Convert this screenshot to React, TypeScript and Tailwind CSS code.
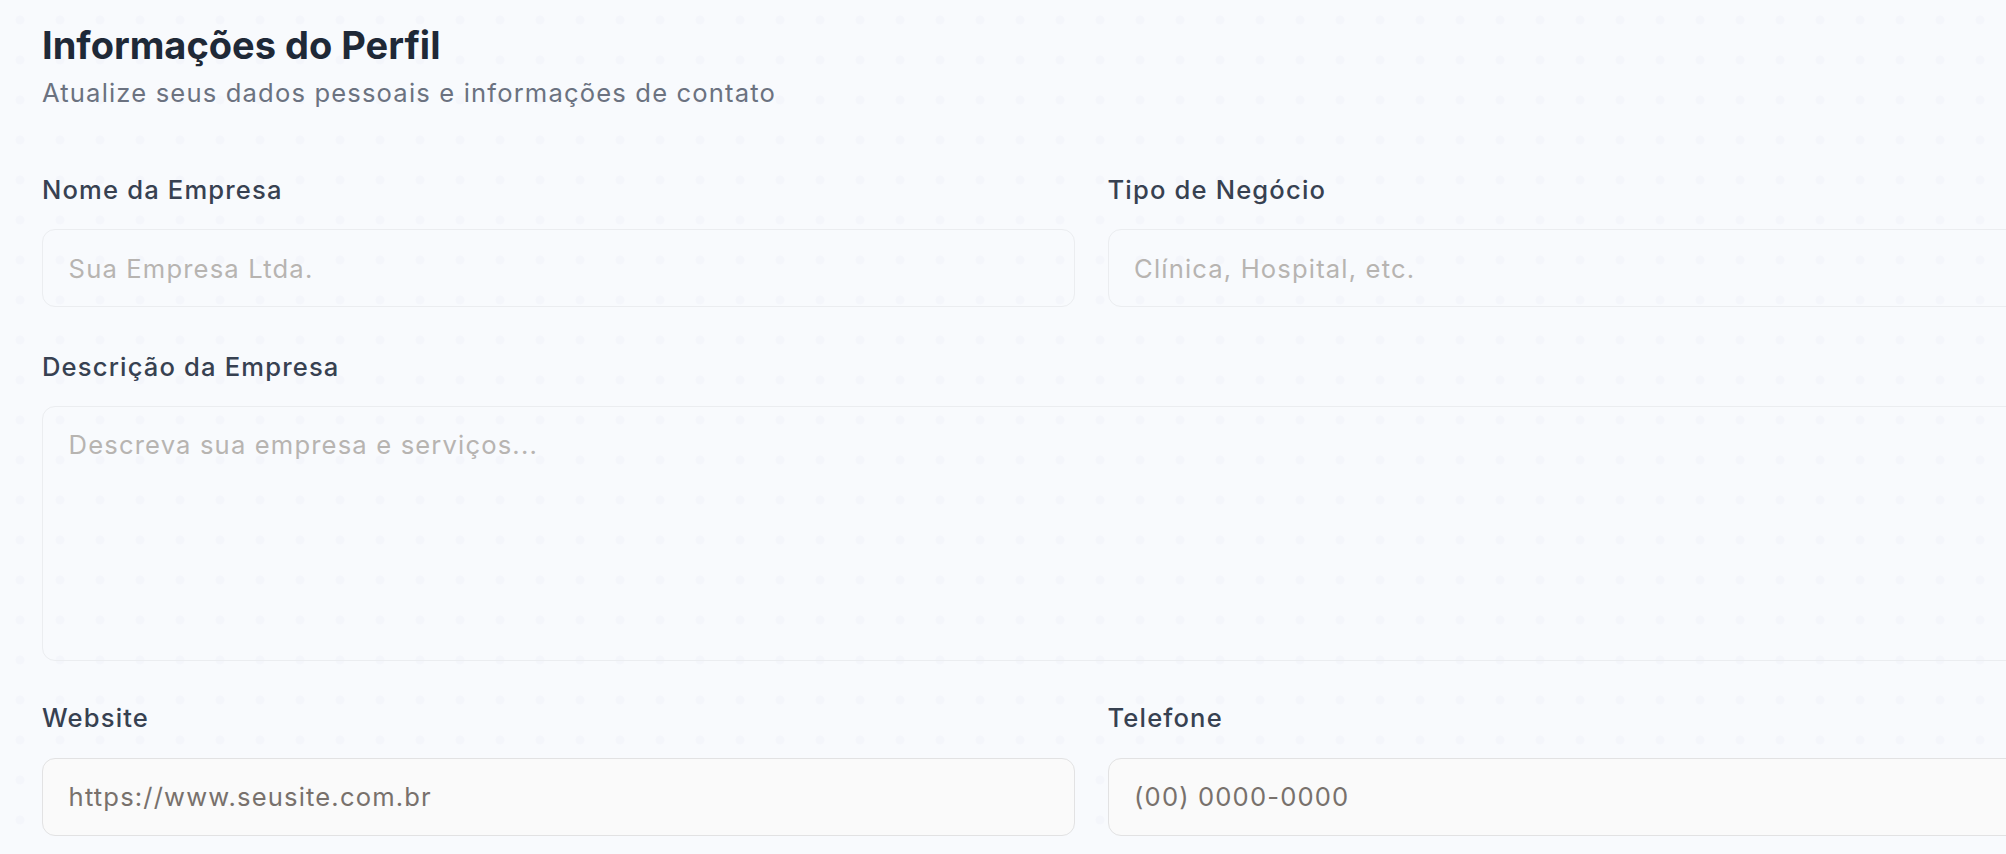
type Field = {
  label: string;
  placeholder: string;
  filled?: boolean;
};

const topRow: Field[] = [
  { label: 'Nome da Empresa', placeholder: 'Sua Empresa Ltda.' },
  { label: 'Tipo de Negócio', placeholder: 'Clínica, Hospital, etc.' },
];

const bottomRow: Field[] = [
  { label: 'Website', placeholder: 'https://www.seusite.com.br', filled: true },
  { label: 'Telefone', placeholder: '(00) 0000-0000', filled: true },
];

function TextField({ field }: { field: Field }) {
  return (
    <label className="flex flex-col">
      <span className="mb-[20px] text-[25.6px] leading-[38.4px] font-medium tracking-[0.045em] text-[#374151]">
        {field.label}
      </span>
      <input
        type="text"
        placeholder={field.placeholder}
        className={
          field.filled
            ? 'h-[78px] w-full rounded-[13px] border border-[#e2e2e3] bg-[#fafafa] px-[25.6px] text-[25.6px] tracking-[0.045em] outline-none placeholder:text-[#78716c]'
            : 'h-[78px] w-full rounded-[13px] border border-[#ebedf0] bg-transparent px-[25.6px] text-[25.6px] tracking-[0.045em] outline-none placeholder:text-[#b7b4b1]'
        }
      />
    </label>
  );
}

export default function App() {
  return (
    <div
      className="h-[854px] w-screen overflow-hidden bg-[#f8fafd] bg-[radial-gradient(circle,#f4f6fb_4px,transparent_5px)] bg-[length:40px_40px]"
      style={{ fontFamily: 'Inter, "Noto Sans", sans-serif' }}
    >
      <div className="w-[2140px] pl-[42px] pt-[20px]">

        {/* ── Header ─────────────────────────────────────────── */}
        <h1 className="text-[38px] leading-[51.2px] font-bold text-[#1f2937]">
          Informações do Perfil
        </h1>
        <p className="mt-[3px] text-[25.6px] leading-[38.4px] tracking-[0.045em] text-[#6b7280]">
          Atualize seus dados pessoais e informações de contato
        </p>

        {/* ── Form ───────────────────────────────────────────── */}
        <div className="mt-[58px] flex flex-col">
          <div className="grid grid-cols-2 gap-[33px]">
            {topRow.map((f) => (
              <TextField key={f.label} field={f} />
            ))}
          </div>

          <label className="mt-[41px] flex flex-col">
            <span className="mb-[20px] text-[25.6px] leading-[38.4px] font-medium tracking-[0.045em] text-[#374151]">
              Descrição da Empresa
            </span>
            <textarea
              placeholder="Descreva sua empresa e serviços..."
              className="h-[255px] w-full resize-none rounded-[13px] border border-[#ebedf0] bg-transparent px-[25.6px] py-[19px] text-[25.6px] leading-[38.4px] tracking-[0.045em] outline-none placeholder:text-[#b7b4b1]"
            />
          </label>

          <div className="mt-[38px] grid grid-cols-2 gap-[33px]">
            {bottomRow.map((f) => (
              <TextField key={f.label} field={f} />
            ))}
          </div>
        </div>

      </div>
    </div>
  );
}
